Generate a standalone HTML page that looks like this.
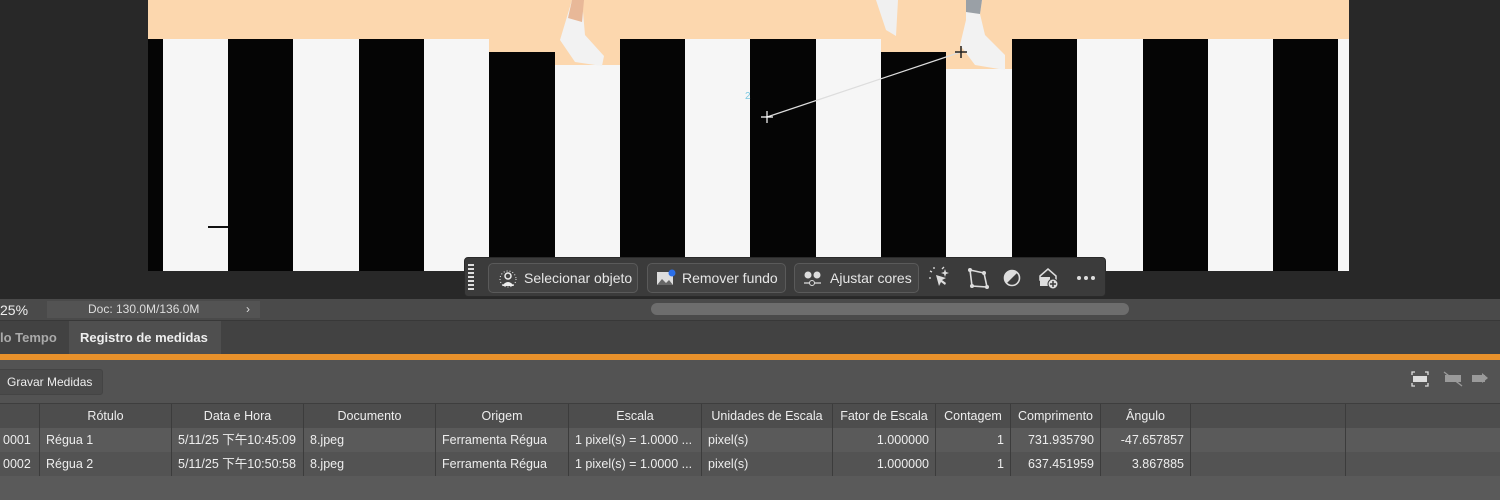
<!DOCTYPE html>
<html><head><meta charset="utf-8"><style>
*{margin:0;padding:0;box-sizing:border-box}
body{width:1500px;height:485px;overflow:hidden;background:#282828;font-family:"Liberation Sans","Noto Sans CJK SC",sans-serif;position:relative}
.a{position:absolute}
.s{position:absolute;top:39px;height:232px}
.b{background:#050505}.w{background:#f6f6f6}
.btn{position:absolute;top:263px;height:30px;border:1px solid #5a5a5a;border-radius:5px;background:#434343;color:#e6e6e6;font-size:14px;line-height:28px}
.row{position:absolute;left:0;width:1500px;height:24px;font-size:12.5px;color:#eee;line-height:24px}
.c{position:absolute;top:0;height:24px;border-right:1px solid #3c3c3c;padding:0 6px;white-space:nowrap;overflow:hidden}
</style></head><body>
<!-- canvas -->
<div class="a" style="left:148px;top:0;width:1201px;height:271px;background:#fcd7ae"></div>
<div class="s b" style="left:148px;width:15px"></div>
<div class="s w" style="left:163px;width:65px"></div>
<div class="s b" style="left:228px;width:65px"></div>
<div class="s w" style="left:293px;width:66px"></div>
<div class="s b" style="left:359px;width:65px"></div>
<div class="s w" style="left:424px;width:65px"></div>
<div class="s b" style="left:489px;width:66px;top:52px;height:219px"></div>
<div class="s w" style="left:555px;width:65px;top:65px;height:206px"></div>
<div class="s b" style="left:620px;width:65px"></div>
<div class="s w" style="left:685px;width:65px"></div>
<div class="s b" style="left:750px;width:66px"></div>
<div class="s w" style="left:816px;width:65px"></div>
<div class="s b" style="left:881px;width:65px;top:52px;height:219px"></div>
<div class="s w" style="left:946px;width:66px;top:69px;height:202px"></div>
<div class="s b" style="left:1012px;width:65px"></div>
<div class="s w" style="left:1077px;width:66px"></div>
<div class="s b" style="left:1143px;width:65px"></div>
<div class="s w" style="left:1208px;width:65px"></div>
<div class="s b" style="left:1273px;width:65px"></div>
<div class="s w" style="left:1338px;width:11px"></div>
<svg class="a" style="left:0;top:0" width="1500" height="300">
<path d="M572 0 L566 20 L560 40 L575 62 L602 66 L604 56 L585 35 L582 0Z" fill="#f2f2f2"/>
<path d="M572 0 L568 18 L582 22 L584 0Z" fill="#e8b898"/>
<path d="M876 0 L886 30 L896 36 L898 0Z" fill="#f0f0f0"/>
<path d="M966 0 L966 20 L960 45 L975 65 L1005 70 L1005 55 L985 35 L980 14 L982 0Z" fill="#f2f2f2"/>
<path d="M966 0 L966 12 L980 14 L982 0Z" fill="#9aa0a6"/>
<line x1="767" y1="117" x2="961" y2="52" stroke="#ddd" stroke-width="1.2"/>
<path d="M761 117h12M767 111v12" stroke="#fff" stroke-width="1.2"/>
<path d="M955 52h12M961 46v12" stroke="#222" stroke-width="1.5"/>
<text x="745" y="99" font-size="10" fill="#7cc8e0" font-family="Liberation Sans">2</text>
<path d="M208 227h20" stroke="#111" stroke-width="2"/>
</svg>
<!-- toolbar -->
<div class="a" style="left:464px;top:257px;width:642px;height:40px;background:#3b3b3b;border-radius:4px;border:1px solid #2a2a2a"></div>
<div class="a" style="left:468px;top:264px;width:6px;height:28px;background:repeating-linear-gradient(#ddd 0 2px,transparent 2px 4px)"></div>
<div class="btn" style="left:488px;width:150px"><svg class="a" style="left:10px;top:6px" width="18" height="18"><circle cx="9" cy="6" r="3" fill="none" stroke="#eee" stroke-width="1.5"/><path d="M3 16q6-8 12 0z" fill="#eee"/><circle cx="9" cy="9" r="8" fill="none" stroke="#eee" stroke-dasharray="1 2"/></svg><span class="a" style="left:35px">Selecionar objeto</span></div>
<div class="btn" style="left:647px;width:139px"><svg class="a" style="left:8px;top:5px" width="20" height="18"><rect x="1" y="3" width="16" height="13" fill="#ddd"/><path d="M1 16l5-6 4 4 3-3 4 5z" fill="#666"/><circle cx="16" cy="4" r="3.5" fill="#2a6ee8"/></svg><span class="a" style="left:34px">Remover fundo</span></div>
<div class="btn" style="left:794px;width:125px"><svg class="a" style="left:8px;top:6px" width="20" height="18"><circle cx="5" cy="5" r="3.5" fill="#ddd"/><circle cx="14" cy="5" r="3.5" fill="#ddd"/><path d="M1 13h17" stroke="#ddd" stroke-width="1.3"/><circle cx="9" cy="13" r="2.5" fill="#434343" stroke="#ddd"/></svg><span class="a" style="left:35px">Ajustar cores</span></div>
<svg class="a" style="left:928px;top:266px" width="170" height="24">
<path d="M8 9l3 11 2-4 4 3 1-2-4-3 4-2z" fill="#ddd"/><path d="M4 6l-2-1M6 3v-2M3 12h-2M14 3l2-2" stroke="#ddd" stroke-width="1.3"/><path d="M16 6l1-3 1 3 3 1-3 1-1 3-1-3-3-1z" fill="#ddd"/>
<path d="M42 4l14 3 3 14-15-1z" fill="none" stroke="#ddd" stroke-width="1.6"/><circle cx="42" cy="4" r="2" fill="#ddd"/><circle cx="56" cy="7" r="2" fill="#ddd"/><circle cx="59" cy="21" r="2" fill="#ddd"/><circle cx="44" cy="20" r="2" fill="#ddd"/>
<circle cx="84" cy="12" r="7.5" fill="none" stroke="#ddd" stroke-width="1.6"/><path d="M78.7 17.3A7.5 7.5 0 0 1 89.3 6.7z" fill="#ddd"/>
<path d="M112 10l8-7 8 7v4h-16z" fill="none" stroke="#ddd" stroke-width="1.5"/><rect x="112" y="11" width="10" height="9" fill="#ddd"/><circle cx="125" cy="18" r="5" fill="#ddd" stroke="#3b3b3b"/><path d="M122 18h6M125 15v6" stroke="#3b3b3b" stroke-width="1.5"/>
<circle cx="151" cy="12" r="2" fill="#ddd"/><circle cx="158" cy="12" r="2" fill="#ddd"/><circle cx="165" cy="12" r="2" fill="#ddd"/>
</svg>
<!-- status bar -->
<div class="a" style="left:0;top:299px;width:1500px;height:21px;background:#4a4a4a"></div>
<div class="a" style="left:0;top:300px;color:#eee;font-size:14px;line-height:20px">25%</div>
<div class="a" style="left:47px;top:301px;width:213px;height:17px;background:#535353;color:#ddd;font-size:12px;line-height:17px;padding-left:41px">Doc: 130.0M/136.0M<span class="a" style="left:199px">›</span></div>
<div class="a" style="left:651px;top:303px;width:478px;height:12px;background:#6d6d6d;border-radius:6px"></div>
<div class="a" style="left:0;top:320px;width:1500px;height:34px;background:#424242;border-top:1px solid #383838"></div>
<div class="a" style="left:0;top:321px;width:68px;height:33px;color:#aaa;font-size:13px;font-weight:bold;line-height:33px">lo Tempo</div>
<div class="a" style="left:69px;top:321px;width:152px;height:33px;background:#4f4f4f;color:#eee;font-size:13px;font-weight:bold;line-height:33px;padding-left:11px">Registro de medidas</div>
<div class="a" style="left:0;top:354px;width:1500px;height:6px;background:#e8912b"></div>
<div class="a" style="left:0;top:360px;width:1500px;height:125px;background:#535353"></div>
<div class="a" style="left:-5px;top:369px;width:108px;height:26px;background:#4a4a4a;border:1px solid #444;border-radius:3px;color:#eee;font-size:12px;line-height:24px;padding-left:11px">Gravar Medidas</div>
<svg class="a" style="left:1410px;top:370px" width="85" height="18"><path d="M2 5V2h3M15 2h3v3M2 13v3h3M15 16h3v-3" stroke="#ddd" fill="none" stroke-width="1.3"/><rect x="3" y="6" width="14" height="6" fill="#ddd"/><rect x="35" y="5" width="16" height="7" fill="#9a9a9a"/><path d="M34 2l18 14" stroke="#9a9a9a" stroke-width="1.3"/><rect x="62" y="5" width="13" height="7" fill="#9a9a9a"/><path d="M72 3l6 5-6 5z" fill="#9a9a9a"/></svg>
<div class="a" style="left:0;top:403px;width:1500px;height:1px;background:#3e3e3e"></div>
<div class="row" style="top:404px;background:#4d4d4d;text-align:center">
<div class="c" style="left:0;width:40px"></div><div class="c" style="left:40px;width:132px">Rótulo</div><div class="c" style="left:172px;width:132px">Data e Hora</div><div class="c" style="left:304px;width:132px">Documento</div><div class="c" style="left:436px;width:133px">Origem</div><div class="c" style="left:569px;width:133px">Escala</div><div class="c" style="left:702px;width:131px">Unidades de Escala</div><div class="c" style="left:833px;width:103px">Fator de Escala</div><div class="c" style="left:936px;width:75px">Contagem</div><div class="c" style="left:1011px;width:90px">Comprimento</div><div class="c" style="left:1101px;width:90px">Ângulo</div><div class="c" style="left:1191px;width:155px"></div></div>
<div class="row" style="top:428px;background:#5a5a5a">
<div class="c" style="left:0;width:40px;padding-left:3px">0001</div><div class="c" style="left:40px;width:132px">Régua 1</div><div class="c" style="left:172px;width:132px">5/11/25 下午10:45:09</div><div class="c" style="left:304px;width:132px">8.jpeg</div><div class="c" style="left:436px;width:133px">Ferramenta Régua</div><div class="c" style="left:569px;width:133px">1 pixel(s) = 1.0000 ...</div><div class="c" style="left:702px;width:131px">pixel(s)</div><div class="c" style="left:833px;width:103px;text-align:right">1.000000</div><div class="c" style="left:936px;width:75px;text-align:right">1</div><div class="c" style="left:1011px;width:90px;text-align:right">731.935790</div><div class="c" style="left:1101px;width:90px;text-align:right">-47.657857</div><div class="c" style="left:1191px;width:155px"></div></div>
<div class="row" style="top:452px;background:#535353">
<div class="c" style="left:0;width:40px;padding-left:3px">0002</div><div class="c" style="left:40px;width:132px">Régua 2</div><div class="c" style="left:172px;width:132px">5/11/25 下午10:50:58</div><div class="c" style="left:304px;width:132px">8.jpeg</div><div class="c" style="left:436px;width:133px">Ferramenta Régua</div><div class="c" style="left:569px;width:133px">1 pixel(s) = 1.0000 ...</div><div class="c" style="left:702px;width:131px">pixel(s)</div><div class="c" style="left:833px;width:103px;text-align:right">1.000000</div><div class="c" style="left:936px;width:75px;text-align:right">1</div><div class="c" style="left:1011px;width:90px;text-align:right">637.451959</div><div class="c" style="left:1101px;width:90px;text-align:right">3.867885</div><div class="c" style="left:1191px;width:155px"></div></div>
<div class="row" style="top:476px;background:#5a5a5a"></div>
</body></html>
